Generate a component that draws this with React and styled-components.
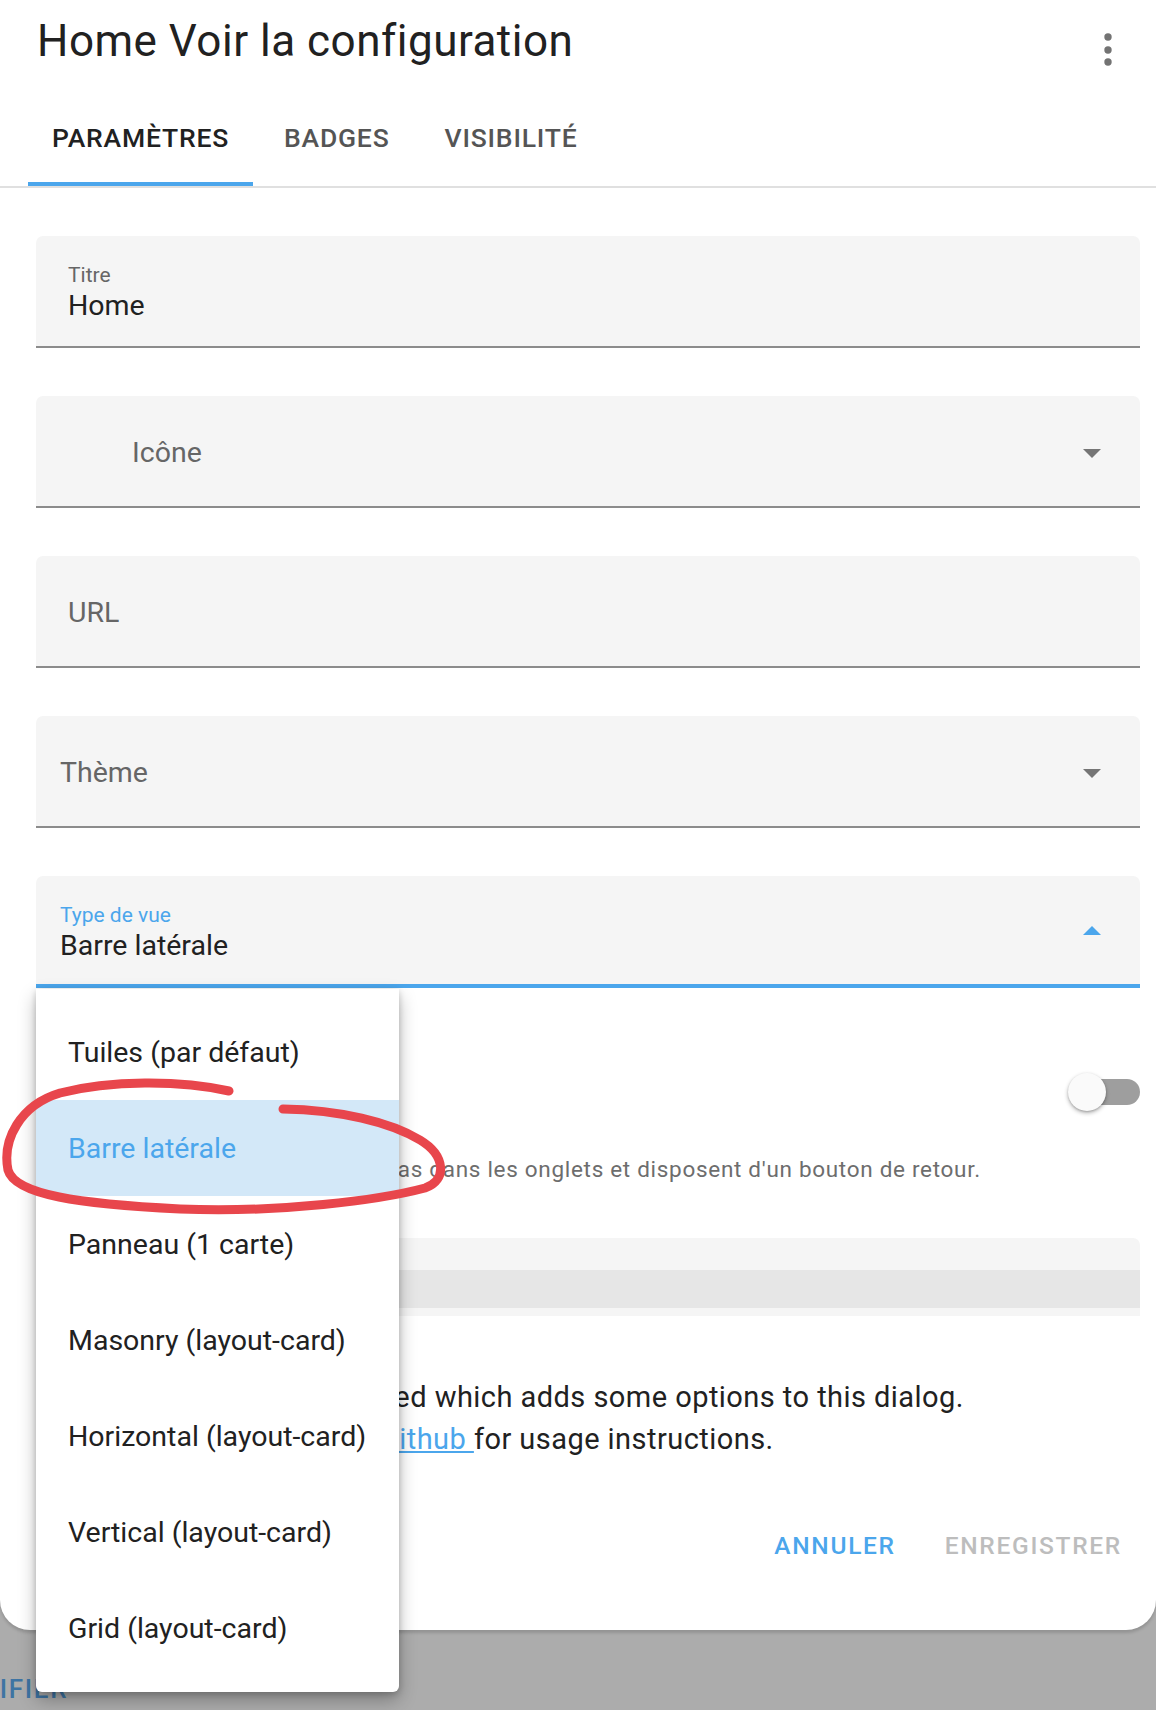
import React from "react";
import styled, { createGlobalStyle } from "styled-components";

const GlobalStyle = createGlobalStyle`
  html, body { margin: 0; padding: 0; }
  body {
    background: #acacac;
    font-family: Roboto, "Noto Sans", "Liberation Sans", sans-serif;
    -webkit-font-smoothing: antialiased;
  }
  * { box-sizing: border-box; }
`;

const BLUE = "#4ba6ec";

const Page = styled.div`
  position: relative;
  width: 1156px;
  height: 1710px;
  overflow: hidden;
  background: #acacac;
`;

const Dialog = styled.div`
  height: 1630px;
  background: #fff;
  border-radius: 0 0 30px 30px;
  box-shadow: 0 3px 3px rgba(0, 0, 0, 0.14);
  display: flex;
  flex-direction: column;
`;

const Header = styled.div`
  display: flex;
  align-items: flex-start;
  justify-content: space-between;
  height: 89px;
  padding: 15px 28px 0 37px;
`;

const Title = styled.h1`
  margin: 0;
  font-size: 44px;
  font-weight: 400;
  line-height: 52px;
  letter-spacing: 0.5px;
  color: #212121;
`;

const Kebab = styled.svg`
  width: 40px;
  height: 40px;
  margin-top: 15px;
`;

const TabBar = styled.div`
  display: flex;
  height: 99px;
  padding-left: 24.5px;
  border-bottom: 2px solid #e0e0e0;
`;

const Tab = styled.div`
  position: relative;
  display: flex;
  align-items: center;
  padding: 0 27.5px;
  font-size: 26.5px;
  font-weight: 500;
  letter-spacing: 0.8px;
  color: ${(p) => (p.$active ? "#212121" : "#555555")};
  &::after {
    content: "";
    position: absolute;
    left: 3.5px;
    right: 3.5px;
    bottom: 0;
    height: 4px;
    background: ${(p) => (p.$active ? BLUE : "transparent")};
  }
`;

const Content = styled.div`
  display: flex;
  flex-direction: column;
  padding: 48px 16px 0 36px;
`;

const Field = styled.div`
  display: flex;
  align-items: ${(p) => (p.$stacked ? "flex-start" : "center")};
  height: 112px;
  background: #f5f5f5;
  border-radius: 7px 7px 0 0;
  border-bottom: ${(p) => (p.$focused ? `4px solid ${BLUE}` : "2px solid #8c8c8c")};
  padding: ${(p) => (p.$stacked ? "27px" : "4px")} 39px 0 ${(p) => p.$inset}px;
  & + & {
    margin-top: 48px;
  }
`;

const FieldText = styled.div`
  display: flex;
  flex-direction: column;
  gap: 2px;
`;

const SmallLabel = styled.div`
  font-size: 21px;
  line-height: 24px;
  color: ${(p) => (p.$focused ? BLUE : "#666666")};
`;

const Value = styled.div`
  font-size: 28.5px;
  line-height: 34px;
  color: ${(p) => (p.$muted ? "#666666" : "#212121")};
`;

const Arrow = styled.svg`
  width: 18px;
  height: 9px;
  margin-left: auto;
  align-self: center;
  margin-top: ${(p) => (p.$stacked ? "-27px" : "0")};
`;

const ToggleRow = styled.div`
  display: flex;
  align-items: center;
  justify-content: space-between;
  height: 84px;
  margin-top: 62px;
  padding-left: 32px;
`;

const ToggleLabel = styled.div`
  font-size: 28.5px;
  color: #212121;
`;

const Switch = styled.div`
  position: relative;
  width: 72px;
  height: 40px;
`;

const Track = styled.div`
  position: absolute;
  right: 0;
  top: 7px;
  width: 62px;
  height: 26px;
  border-radius: 13px;
  background: #9e9e9e;
`;

const Knob = styled.div`
  position: absolute;
  left: 0;
  top: 1px;
  width: 38px;
  height: 38px;
  border-radius: 50%;
  background: #fafafa;
  box-shadow: 0 2px 4px rgba(0, 0, 0, 0.3), 0 1px 2px rgba(0, 0, 0, 0.15);
`;

const Description = styled.div`
  margin-top: 22px;
  padding-left: 30px;
  font-size: 22.5px;
  line-height: 26px;
  letter-spacing: 0.7px;
  color: #6d6d6d;
  white-space: nowrap;
`;

const CodeBox = styled.div`
  margin-top: 56px;
  height: 78px;
  background: #f5f5f5;
  border-radius: 7px 7px 0 0;
  padding-top: 32px;
`;

const CodeLine = styled.div`
  height: 38px;
  background: #e6e6e6;
`;

const Paragraph = styled.div`
  margin-top: 60px;
  font-size: 29px;
  line-height: 42px;
  letter-spacing: 0.45px;
  color: #212121;
  white-space: nowrap;
`;

const Line = styled.div`
  padding-left: ${(p) => p.$indent}px;
`;

const Link = styled.span`
  color: ${BLUE};
  text-decoration: underline;
`;

const Actions = styled.div`
  display: flex;
  justify-content: flex-end;
  gap: 13px;
  margin-top: 53px;
`;

const TextButton = styled.div`
  display: flex;
  align-items: center;
  height: 64px;
  padding: 0 18px;
  font-size: 24.5px;
  font-weight: 500;
  letter-spacing: 1.7px;
  color: ${(p) => (p.$disabled ? "#bdbdbd" : BLUE)};
`;

const Backdrop = styled.div`
  display: flex;
  padding-top: 44px;
`;

const UnderButton = styled.div`
  margin-left: -63px;
  font-size: 26px;
  line-height: 30px;
  font-weight: 500;
  letter-spacing: 1.7px;
  color: #3e74a3;
`;

const Menu = styled.div`
  position: absolute;
  left: 36px;
  top: 989px;
  width: 363px;
  padding: 15px 0 16px;
  background: #fff;
  border-radius: 0 0 6px 6px;
  box-shadow: 0 8px 18px rgba(0, 0, 0, 0.28), 0 2px 6px rgba(0, 0, 0, 0.18);
  display: flex;
  flex-direction: column;
`;

const MenuItem = styled.div`
  display: flex;
  align-items: center;
  height: 96px;
  padding-left: 32px;
  font-size: 28.5px;
  white-space: nowrap;
  color: ${(p) => (p.$selected ? BLUE : "#212121")};
  background: ${(p) => (p.$selected ? "#d3e8f8" : "transparent")};
`;

const Annotation = styled.svg`
  position: absolute;
  left: 0;
  top: 0;
  width: 1156px;
  height: 1710px;
  pointer-events: none;
`;

const DownArrow = ({ up, color = "#757575", stacked }) => (
  <Arrow viewBox="0 0 18 9" $stacked={stacked}>
    {up ? (
      <polygon points="0,9 18,9 9,0" fill={color} />
    ) : (
      <polygon points="0,0 18,0 9,9" fill={color} />
    )}
  </Arrow>
);

const items = [
  "Tuiles (par défaut)",
  "Barre latérale",
  "Panneau (1 carte)",
  "Masonry (layout-card)",
  "Horizontal (layout-card)",
  "Vertical (layout-card)",
  "Grid (layout-card)",
];

export default function App() {
  return (
    <Page>
      <GlobalStyle />
      <Dialog>
        <Header>
          <Title>Home Voir la configuration</Title>
          <Kebab viewBox="0 0 40 40">
            <circle cx="20" cy="7" r="3.7" fill="#737373" />
            <circle cx="20" cy="20" r="3.7" fill="#737373" />
            <circle cx="20" cy="32" r="3.7" fill="#737373" />
          </Kebab>
        </Header>
        <TabBar>
          <Tab $active>PARAMÈTRES</Tab>
          <Tab>BADGES</Tab>
          <Tab>VISIBILITÉ</Tab>
        </TabBar>
        <Content>
          <Field $stacked $inset={32}>
            <FieldText>
              <SmallLabel>Titre</SmallLabel>
              <Value>Home</Value>
            </FieldText>
          </Field>
          <Field $inset={96}>
            <Value $muted>Icône</Value>
            <DownArrow />
          </Field>
          <Field $inset={32}>
            <Value $muted>URL</Value>
          </Field>
          <Field $inset={24}>
            <Value $muted>Thème</Value>
            <DownArrow />
          </Field>
          <Field $stacked $focused $inset={24}>
            <FieldText>
              <SmallLabel $focused>Type de vue</SmallLabel>
              <Value>Barre latérale</Value>
            </FieldText>
            <DownArrow up color={BLUE} stacked />
          </Field>

          <ToggleRow>
            <ToggleLabel>Sous-vue</ToggleLabel>
            <Switch>
              <Track />
              <Knob />
            </Switch>
          </ToggleRow>
          <Description>
            Les sous-vues n'apparaissent pas dans les onglets et disposent d'un bouton de retour.
          </Description>

          <CodeBox>
            <CodeLine />
          </CodeBox>

          <Paragraph>
            <Line $indent={34}>The layout-card is installed which adds some options to this dialog.</Line>
            <Line $indent={27}>
              Please see the page on <Link>Github </Link>for usage instructions.
            </Line>
          </Paragraph>

          <Actions>
            <TextButton>ANNULER</TextButton>
            <TextButton $disabled>ENREGISTRER</TextButton>
          </Actions>
        </Content>
      </Dialog>
      <Backdrop>
        <UnderButton>MODIFIER</UnderButton>
      </Backdrop>

      <Menu>
        {items.map((it) => (
          <MenuItem key={it} $selected={it === "Barre latérale"}>
            {it}
          </MenuItem>
        ))}
      </Menu>

      <Annotation viewBox="0 0 1156 1710">
        <path
          d="M 229 1091 C 180 1080, 110 1080, 60 1093 C 20 1105, 2 1140, 8 1170 C 15 1195, 80 1204, 180 1209 C 280 1213, 380 1200, 425 1188 C 448 1180, 445 1155, 420 1140 C 390 1122, 340 1110, 283 1109"
          fill="none"
          stroke="#e8464c"
          strokeWidth="9"
          strokeLinecap="round"
          strokeLinejoin="round"
        />
      </Annotation>
    </Page>
  );
}
